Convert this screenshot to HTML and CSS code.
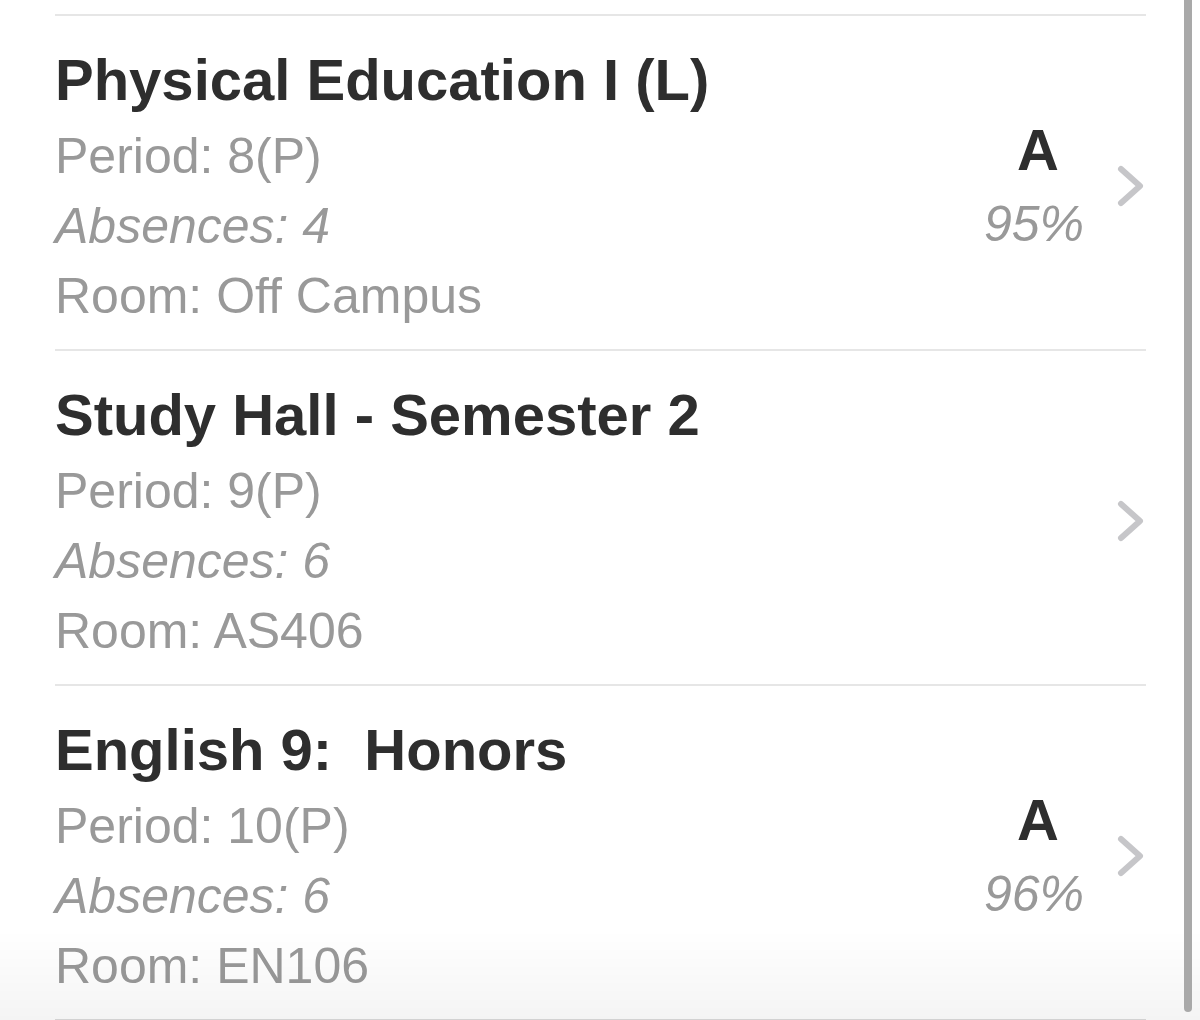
FILE: index.html
```html
<!DOCTYPE html>
<html lang="en">
<head>
    <meta charset="UTF-8">
    <meta name="viewport" content="width=device-width, initial-scale=1.0">
    <title>Classes</title>
    <link rel="stylesheet" href="styles.css">
</head>
<body>
    <ul class="class-list">
        <li class="class-row">
            <div class="class-info">
                <h2 class="class-name">Physical Education I (L)</h2>
                <div class="detail">Period: 8(P)</div>
                <div class="detail absences">Absences: 4</div>
                <div class="detail">Room: Off Campus</div>
            </div>
            <div class="grade">
                <div class="letter">A</div>
                <div class="percent">95%</div>
            </div>
            <svg class="chevron" viewBox="0 0 30 44"><path d="M5 5 L24 22 L5 39"/></svg>
        </li>
        <li class="class-row">
            <div class="class-info">
                <h2 class="class-name">Study Hall - Semester 2</h2>
                <div class="detail">Period: 9(P)</div>
                <div class="detail absences">Absences: 6</div>
                <div class="detail">Room: AS406</div>
            </div>
            <div class="grade"></div>
            <svg class="chevron" viewBox="0 0 30 44"><path d="M5 5 L24 22 L5 39"/></svg>
        </li>
        <li class="class-row">
            <div class="class-info">
                <h2 class="class-name">English 9:&nbsp; Honors</h2>
                <div class="detail">Period: 10(P)</div>
                <div class="detail absences">Absences: 6</div>
                <div class="detail">Room: EN106</div>
            </div>
            <div class="grade">
                <div class="letter">A</div>
                <div class="percent">96%</div>
            </div>
            <svg class="chevron" viewBox="0 0 30 44"><path d="M5 5 L24 22 L5 39"/></svg>
        </li>
    </ul>

    <!-- shade above the tab bar + scroll indicator -->
    <div class="bottom-fade"></div>
    <div class="scrollbar"></div>
</body>
</html>
```

FILE: styles.css
```css
/* Page */
body {
    margin: 0;
    padding-top: 14px;
    background: #fff;
    font-family: "Liberation Sans", Arial, sans-serif;
    height: 1020px;
    overflow: hidden;
}

/* Class list */
.class-list {
    list-style: none;
    margin: 0 0 0 55px;
    padding: 0;
    width: 1091px;
    border-bottom: 3px solid #dcdcdc;
}

.class-row {
    display: flex;
    align-items: center;
    border-top: 2px solid #e6e6e6;
    padding: 29px 0 18px;
}

.class-info {
    flex: 1;
}

.class-name {
    margin: 0 0 6px;
    font-size: 58px;
    line-height: 70px;
    font-weight: bold;
    color: #2e2e2e;
}

.detail {
    font-size: 50px;
    line-height: 70px;
    color: #999;
}

.absences {
    font-style: italic;
}

/* Grade column */
.grade {
    text-align: center;
}

.letter {
    font-size: 58px;
    line-height: 64px;
    font-weight: bold;
    color: #2e2e2e;
    padding-left: 8px;
    margin-bottom: 7px;
}

.percent {
    font-size: 50px;
    line-height: 70px;
    font-style: italic;
    color: #999;
}

.chevron {
    width: 30px;
    height: 44px;
    margin-left: 32px;
    margin-top: -4px;
    fill: none;
    stroke: #c6c6c9;
    stroke-width: 6;
    stroke-linecap: round;
    stroke-linejoin: round;
}

/* Overlays */
.bottom-fade {
    position: fixed;
    left: 0;
    right: 0;
    bottom: 0;
    height: 90px;
    background: linear-gradient(rgba(0, 0, 0, 0), rgba(0, 0, 0, 0.045));
    pointer-events: none;
}

.scrollbar {
    position: fixed;
    top: -10px;
    right: 8px;
    width: 8px;
    height: 1022px;
    border-radius: 4px;
    background: #a9a9a9;
}
```
